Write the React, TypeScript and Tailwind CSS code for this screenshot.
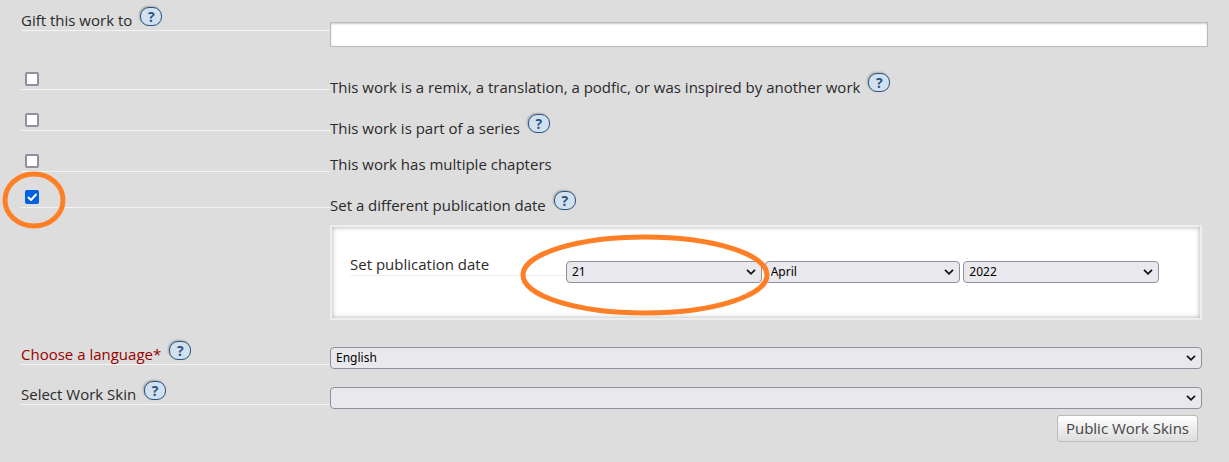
import type { ReactNode } from "react";
import clsx from "clsx";

type Option = { id: string; label: string; help?: boolean; checked?: boolean };

const options: Option[] = [
  {
    id: "remix",
    label: "This work is a remix, a translation, a podfic, or was inspired by another work",
    help: true,
  },
  { id: "series", label: "This work is part of a series", help: true },
  { id: "chapters", label: "This work has multiple chapters" },
  { id: "backdate", label: "Set a different publication date", help: true, checked: true },
];

function Help({ topic }: { topic: string }) {
  return (
    <button
      type="button"
      aria-label={`Help: ${topic}`}
      className="ml-2 flex h-[19px] w-[22px] shrink-0 items-center justify-center rounded-[9px] border border-[#2a547e] bg-[#d1e1ef] text-[14px] leading-none font-bold text-[#2a547e] shadow-[-1px_-1px_2px_#aaa]"
    >
      ?
    </button>
  );
}

function Row({ left, children }: { left: ReactNode; children?: ReactNode }) {
  return (
    <div className="grid grid-cols-[309px_1fr] items-start">
      <div className="border-b border-[#f3f3f3]">{left}</div>
      {children}
    </div>
  );
}

function FieldLabel({ id, text, required }: { id: string; text: string; required?: boolean }) {
  return (
    <div className="flex h-[23px] items-start">
      <label htmlFor={id} className={clsx("mt-[3px] leading-5", required && "text-[#990000]")}>
        {text}
      </label>
      <Help topic={text} />
    </div>
  );
}

function Select({ id, label, value }: { id: string; label?: string; value: string }) {
  return (
    <div className="relative min-w-0">
      <select
        id={id}
        aria-label={label}
        defaultValue={value}
        className="block h-[22px] w-full appearance-none rounded-[4px] border border-[#8f8f9d] bg-[#e9e9ed] pr-6 pl-[5px] font-['Noto_Sans',sans-serif] text-[12px] leading-5 text-black"
      >
        <option value={value}>{value}</option>
      </select>
      <svg
        viewBox="0 0 10 6"
        className="pointer-events-none absolute top-2 right-[6px] h-[6px] w-[10px]"
        fill="none"
        stroke="#111"
        strokeWidth="1.7"
        aria-hidden="true"
      >
        <path d="M1 .8 5 4.8 9 .8" />
      </svg>
    </div>
  );
}

// hand-drawn style ring used to highlight a control
function Ring({ rx, ry, className }: { rx: number; ry: number; className: string }) {
  const w = rx * 2 + 6;
  const h = ry * 2 + 6;
  return (
    <svg
      width={w}
      height={h}
      viewBox={`0 0 ${w} ${h}`}
      className={clsx("pointer-events-none absolute z-10 max-w-none", className)}
      aria-hidden="true"
    >
      <ellipse cx={w / 2} cy={h / 2} rx={rx} ry={ry} fill="none" stroke="#ff7f27" strokeWidth="5" />
    </svg>
  );
}

function Checkbox({ id, checked }: { id: string; checked?: boolean }) {
  return (
    <div className="relative size-[14px]">
      <input
        id={id}
        type="checkbox"
        defaultChecked={checked}
        className="peer block size-[14px] appearance-none rounded-[2px] border-2 border-[#8f8f9d] bg-white checked:border-[#0060df] checked:bg-[#0060df]"
      />
      <svg
        viewBox="0 0 14 14"
        className="pointer-events-none absolute inset-0 hidden size-[14px] peer-checked:block"
        fill="none"
        stroke="#fff"
        strokeWidth="2"
        strokeLinecap="round"
        strokeLinejoin="round"
        aria-hidden="true"
      >
        <path d="M3.5 7.5 6 10 11 4.5" />
      </svg>
      {checked && <Ring rx={29} ry={26} className="-top-[19px] -left-[23px]" />}
    </div>
  );
}

export default function App() {
  return (
    <form className="min-h-screen overflow-hidden bg-[#dddddd] pl-[21px] font-['Open_Sans','Noto_Sans',sans-serif] text-[15px] text-[#2a2a2a]">
      <div className="h-[66px] pt-[7px]">
        <Row left={<FieldLabel id="gift" text="Gift this work to" />}>
          <div className="mt-[15px] pr-[21px]">
            <input
              id="gift"
              type="text"
              className="block h-[25px] w-full border border-[#bbb] bg-white px-1 shadow-[inset_0_1px_2px_#ccc]"
            />
          </div>
        </Row>
      </div>

      {options.map(({ id, label, help, checked }) => (
        <Row
          key={id}
          left={
            <div className="h-[23px] pt-[6px] pl-1">
              <Checkbox id={id} checked={checked} />
            </div>
          }
        >
          <div className={clsx("flex items-start pb-[10px]", help ? "pt-[7px]" : "pt-[2px]")}>
            <label htmlFor={id} className="mt-1 leading-5">
              {label}
            </label>
            {help && <Help topic={label} />}
          </div>
        </Row>
      ))}

      <fieldset
        aria-label="Publication date"
        className="mr-[27px] ml-[309px] border-2 border-[#eeeeee] bg-white pt-[27px] pr-[41px] pb-[35px] pl-[18px] shadow-[inset_0_0_5px_#aaa]"
      >
        <div className="grid grid-cols-[216px_1fr] items-start">
          <label htmlFor="day" className="border-b border-[#eee] pb-px leading-5">
            Set publication date
          </label>
          <div className="mt-[7px] grid grid-cols-3 gap-x-[3px]">
            <div className="relative">
              <Select id="day" value="21" />
              <Ring rx={122} ry={38} className="-top-[27px] -left-[46px]" />
            </div>
            <Select id="month" label="Month" value="April" />
            <Select id="year" label="Year" value="2022" />
          </div>
        </div>
      </fieldset>

      <div className="mt-[21px] flex flex-col gap-4 pr-[27px]">
        <Row left={<FieldLabel id="language" text="Choose a language*" required />}>
          <div className="mt-[6px] -mb-1">
            <Select id="language" value="English" />
          </div>
        </Row>
        <Row left={<FieldLabel id="skin" text="Select Work Skin" />}>
          <div className="mt-[6px] -mb-1">
            <Select id="skin" value="" />
          </div>
        </Row>
      </div>

      <div className="mt-[10px] flex justify-end pr-[31px]">
        <button
          type="button"
          className="h-[27px] rounded-[3px] border border-[#bbb] bg-linear-to-b from-white to-[#dddddd] px-2 pb-[2px] leading-5 text-[#444]"
        >
          Public Work Skins
        </button>
      </div>
    </form>
  );
}
